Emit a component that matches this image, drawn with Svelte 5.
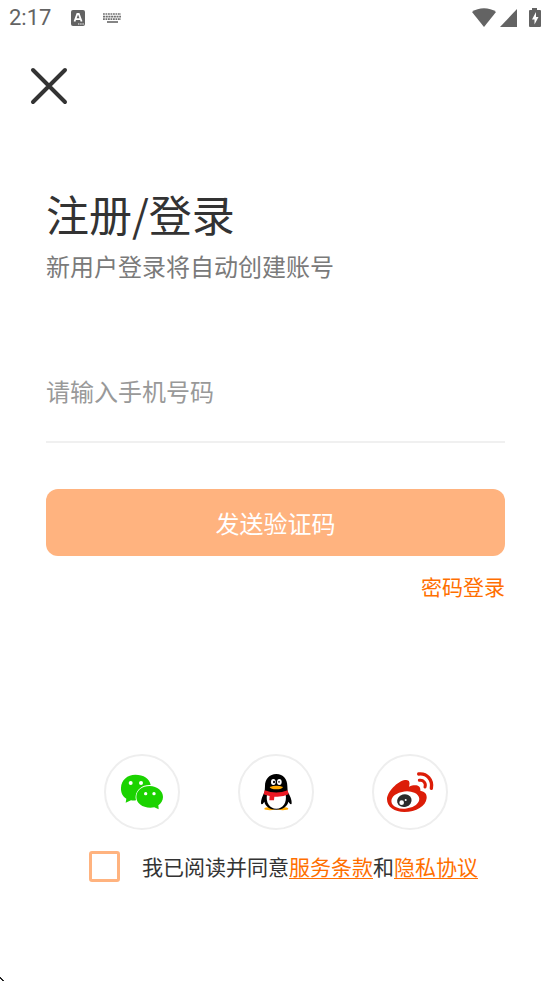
<script lang="ts">
let phone = $state('');
let agreed = $state(false);

function submit(e: SubmitEvent) {
  e.preventDefault();
}
</script>

<div class="screen">
  <header class="status">
    <span class="time">2:17</span>
    <svg class="lang" width="14" height="16" viewBox="0 0 14 16" aria-hidden="true">
      <rect width="14" height="16" rx="2" fill="#636363" />
      <path d="M3.5 11.5 6.3 4h1.5l2.8 7.500M4.600 9.200h4.900" fill="none" stroke="#fff" stroke-width="1.8" />
      <path d="M7 14h1.4M9.200 14h1.400M11.400 14h1.400" stroke="#fff" stroke-width="1.2" />
    </svg>
    <svg class="keys" width="20" height="10" viewBox="0 0 20 10" aria-hidden="true">
      <g fill="none" stroke="#707070" stroke-width="1.7">
        <path d="M1 1h18" stroke-dasharray="1.8 .7" />
        <path d="M1 3.6h18" stroke-dasharray="2.1 .6" />
        <path d="M1 6.2h18" stroke-dasharray="1.8 .7" />
        <path d="M5 9h11" />
      </g>
    </svg>
    <svg class="signals" width="70" height="22" viewBox="0 0 70 22" aria-hidden="true">
      <g fill="#636363">
        <path d="M0 5C6.500 0 17.500 0 24 5L12 20Z" />
        <path d="M45 2v18H28Z" />
        <path d="M60 1h5v2h3q1 0 1 1v15q0 1-1 1H58q-1 0-1-1V4q0-1 1-1h2Z" />
      </g>
      <path d="M64 5 60 12.500h2.500v5L66.500 10H64Z" fill="#fff" />
    </svg>
  </header>

  <button class="close" type="button" aria-label="关闭">
    <svg width="38" height="38" viewBox="0 0 38 38" aria-hidden="true">
      <path d="M3 3l32 32M35 3 3 35" fill="none" stroke="#333" stroke-width="4" stroke-linecap="round" />
    </svg>
  </button>

  <main>
    <h1>注册/登录</h1>
    <p class="subtitle">新用户登录将自动创建账号</p>

    <form onsubmit={submit}>
      <input class="phone" type="tel" aria-label="手机号码" placeholder="请输入手机号码" bind:value={phone} />
      <button class="send" type="submit">发送验证码</button>
    </form>
    <a class="password" href="#password">密码登录</a>

    <div class="socials">
      <button type="button" aria-label="微信">
        <svg viewBox="27 27 228 228" aria-hidden="true">
          <path d="M121 89c25 0 43 12 46 31-23-2-43 13-45 33q-1 8 1 13-8 1-15 0L92 173l2-12C83 154 77 142 78 128c1-23 19-39 43-39Z" fill="#1bd300" />
          <path d="M164 123c23 0 40 15 40 33 0 11-6 19-14 25l1 12-13-6c-31 5-54-10-54-31 0-19 17-33 40-33Z" fill="#1bd300" />
          <g fill="#fff">
            <circle cx="107" cy="114" r="6" /><circle cx="138" cy="114" r="6" />
            <circle cx="152" cy="146" r="5" /><circle cx="177" cy="146" r="5" />
          </g>
        </svg>
      </button>
      <button type="button" aria-label="QQ">
        <svg viewBox="22 27 228 228" aria-hidden="true">
          <ellipse cx="118" cy="191" rx="17" ry="5" fill="#ffa900" />
          <ellipse cx="156" cy="191" rx="17" ry="5" fill="#ffa900" />
          <path d="M137 87c21 0 33 15 33 36l1 17c7 12 13 25 12 35q-1 8-10-5c-3 14-16 24-36 24s-33-10-36-24q-8 13-10 5c-1-10 5-23 11-35l1-17c0-21 13-36 34-36Z" fill="#000" />
          <path d="M109 149h56c4 22-7 42-28 42s-32-20-28-42Z" fill="#fff" />
          <path d="M102 136q35 13 69 0l3 12q-17 9-43 7l-1 11h-14l1-13q-10-1-18-5Z" fill="#eb1923" />
          <ellipse cx="128" cy="111" rx="7" ry="9" fill="#fff" />
          <ellipse cx="146" cy="111" rx="7" ry="9" fill="#fff" />
          <ellipse cx="130" cy="111" rx="3" ry="4" fill="#000" />
          <path d="M142 112q3-5 6 0" fill="none" stroke="#000" stroke-width="3" />
          <path d="M117 126q20-7 40 0-3 7-20 7t-20-7Z" fill="#ffa900" />
        </svg>
      </button>
      <button type="button" aria-label="微博">
        <svg viewBox="29 27 228 228" aria-hidden="true">
          <path d="M74 163c0-22 32-55 54-58 13-2 16 7 12 20 17-7 36-6 34 12 14 3 20 10 19 22-2 25-32 42-67 42-29 0-52-14-52-38Z" fill="#dc1d08" />
          <ellipse cx="129" cy="165" rx="42" ry="26" fill="#fff" transform="rotate(-7 129 165)" />
          <ellipse cx="126" cy="167" rx="22" ry="19" fill="#2b2b2b" transform="rotate(-15 126 167)" />
          <circle cx="118" cy="173" r="7" fill="#fff" />
          <circle cx="130" cy="165" r="3" fill="#fff" />
          <g fill="none" stroke="#dc1d08" stroke-linecap="round">
            <path d="M169 87c25-3 43 18 38 43" stroke-width="10" />
            <path d="M171 106c12-2 21 8 17 20" stroke-width="9" />
          </g>
        </svg>
      </button>
    </div>

    <div class="agreement">
      <input id="agree" type="checkbox" bind:checked={agreed} />
      <p>
        <label for="agree">我已阅读并同意</label><a href="#terms">服务条款</a>和<a href="#privacy">隐私协议</a>
      </p>
    </div>
  </main>

  <svg class="pointer" width="4" height="4" viewBox="0 0 4 4" aria-hidden="true">
    <path d="M0 0h1v1h1v1h1v1h1v1H2V3H1V2H0Z" fill="#222" />
  </svg>
</div>

<style>
  :global(body) {
    margin: 0;
    background: #fff;
  }
  .screen {
    position: relative;
    box-sizing: border-box;
    min-height: 100vh;
    font-family: 'Noto Sans CJK SC', sans-serif;
    color: #333;
    background: #fff;
  }
  button {
    padding: 0;
    font: inherit;
    cursor: pointer;
  }
  svg {
    display: block;
  }

  .status {
    display: flex;
    align-items: center;
    height: 36px;
    padding: 0 9px;
  }
  .time {
    font: 400 22px/36px Roboto, sans-serif;
    color: #636363;
  }
  .lang {
    margin-left: 20px;
  }
  .keys {
    margin-left: 17px;
  }
  .signals {
    margin-left: auto;
  }

  .close {
    display: block;
    margin: 31px 0 0 30px;
    border: none;
    background: none;
  }

  main {
    padding: 80px 46px 0;
  }
  h1 {
    margin: 0;
    font-size: 43px;
    font-weight: 400;
    line-height: 56px;
  }
  .subtitle {
    margin: 7px 0 0;
    font-size: 24px;
    line-height: 36px;
    color: #7a7a7a;
  }

  form {
    margin-top: 57px;
  }
  .phone {
    display: block;
    box-sizing: border-box;
    width: 100%;
    height: 102px;
    padding: 0 0 2px;
    border: none;
    border-bottom: 2px solid #f0f0f0;
    border-radius: 0;
    outline: none;
    font: inherit;
    font-size: 24px;
    color: #333;
    background: none;
  }
  .phone::placeholder {
    color: #999;
    opacity: 1;
  }
  .send {
    display: block;
    width: 100%;
    height: 67px;
    margin-top: 46px;
    border: none;
    border-radius: 12px;
    font-size: 24px;
    color: #fff;
    background: #ffb37f;
  }
  .password {
    display: block;
    width: fit-content;
    margin: 14px 0 0 auto;
    font-size: 21px;
    line-height: 32px;
    text-decoration: none;
  }
  a {
    color: #ff6f00;
  }

  .socials {
    display: flex;
    justify-content: center;
    gap: 58px;
    margin-top: 152px;
  }
  .socials button {
    box-sizing: border-box;
    width: 76px;
    height: 76px;
    border: 2px solid #eee;
    border-radius: 50%;
    background: #fff;
  }
  .socials svg {
    width: 76px;
    height: 76px;
    margin: -2px;
  }

  .agreement {
    display: flex;
    align-items: flex-start;
    gap: 22px;
    margin-top: 21px;
    padding-left: 43px;
  }
  .agreement input {
    appearance: none;
    flex: none;
    width: 31px;
    height: 31px;
    margin: 0;
    border: 3px solid #ffb37f;
    border-radius: 3px;
  }
  .agreement input:checked {
    background: #ff6f00;
  }
  .agreement p {
    margin: 0;
    font-size: 21px;
    line-height: 30px;
  }
  .agreement a {
    text-underline-offset: 3px;
    text-decoration-thickness: 1px;
  }

  .pointer {
    position: absolute;
    bottom: 0;
    left: 0;
  }
</style>
